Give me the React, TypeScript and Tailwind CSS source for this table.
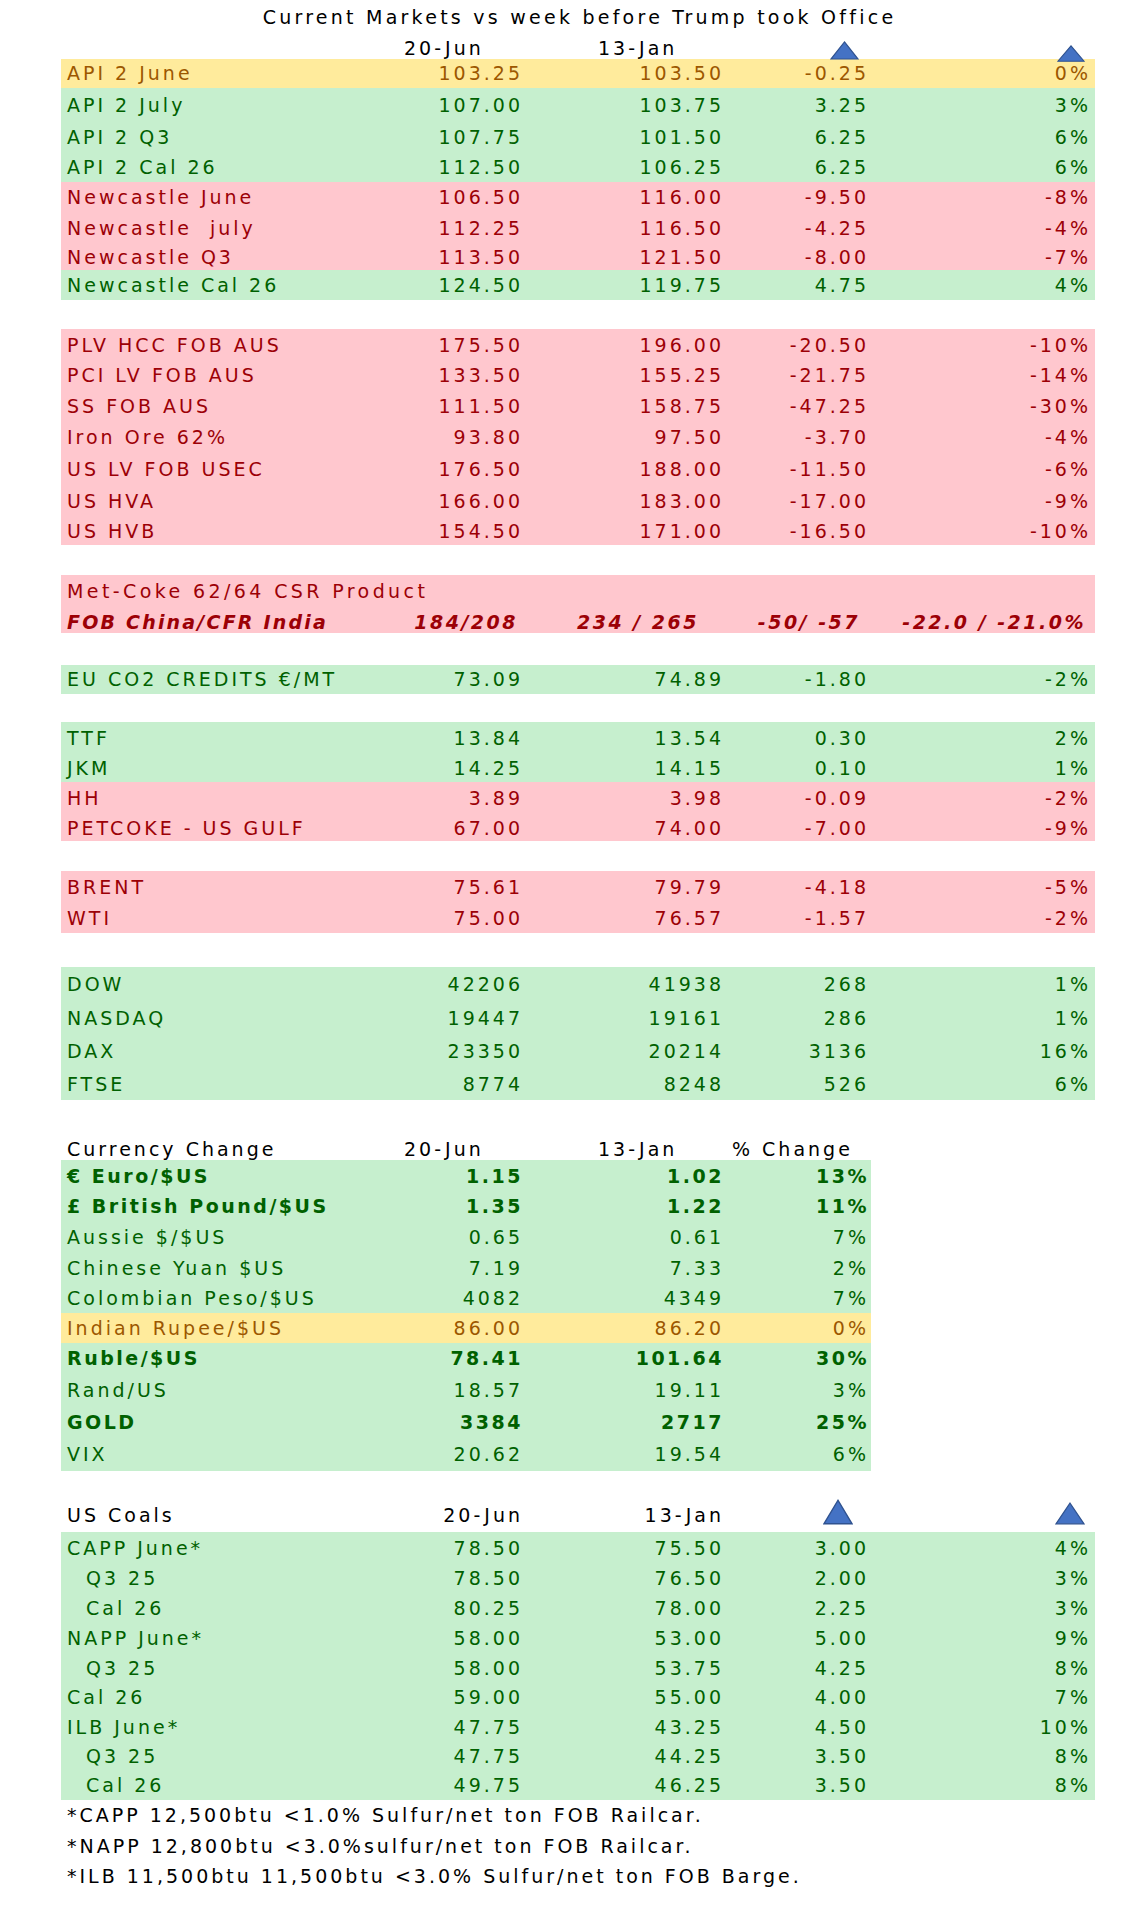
import React from "react";

type Tone = "g" | "r" | "y";

type Row = {
  label: string;
  v: string[];
  tone: Tone;
  h: string;
  bold?: boolean;
  indent?: boolean;
};

const toneCls: Record<Tone, string> = {
  g: "bg-[#c6efce] text-[#006100]",
  r: "bg-[#ffc7ce] text-[#9c0006]",
  y: "bg-[#ffeb9c] text-[#9c5700]",
};

// full-width table grid (label, 20-Jun, 13-Jan, change, %)
const wide = "grid grid-cols-[333px_123px_201px_145px_222px] items-center pl-[6px] pr-[4px]";
// currency table has no separate change column
const narrow = "grid grid-cols-[333px_123px_201px_145px] items-center pl-[6px] pr-[2px]";

const markets: Row[][] = [
  [
    { label: "API 2 June", v: ["103.25", "103.50", "-0.25", "0%"], tone: "y", h: "h-[29px]" },
    { label: "API 2 July", v: ["107.00", "103.75", "3.25", "3%"], tone: "g", h: "h-[34px]" },
    { label: "API 2 Q3", v: ["107.75", "101.50", "6.25", "6%"], tone: "g", h: "h-[31px]" },
    { label: "API 2 Cal 26", v: ["112.50", "106.25", "6.25", "6%"], tone: "g", h: "h-[29px]" },
    { label: "Newcastle June", v: ["106.50", "116.00", "-9.50", "-8%"], tone: "r", h: "h-[31px]" },
    { label: "Newcastle  july", v: ["112.25", "116.50", "-4.25", "-4%"], tone: "r", h: "h-[30px]" },
    { label: "Newcastle Q3", v: ["113.50", "121.50", "-8.00", "-7%"], tone: "r", h: "h-[27px]" },
    { label: "Newcastle Cal 26", v: ["124.50", "119.75", "4.75", "4%"], tone: "g", h: "h-[30px]" },
  ],
  [
    { label: "PLV HCC FOB AUS", v: ["175.50", "196.00", "-20.50", "-10%"], tone: "r", h: "h-[32px]" },
    { label: "PCI LV FOB AUS", v: ["133.50", "155.25", "-21.75", "-14%"], tone: "r", h: "h-[29px]" },
    { label: "SS FOB AUS", v: ["111.50", "158.75", "-47.25", "-30%"], tone: "r", h: "h-[32px]" },
    { label: "Iron Ore 62%", v: ["93.80", "97.50", "-3.70", "-4%"], tone: "r", h: "h-[31px]" },
    { label: "US LV FOB USEC", v: ["176.50", "188.00", "-11.50", "-6%"], tone: "r", h: "h-[32px]" },
    { label: "US HVA", v: ["166.00", "183.00", "-17.00", "-9%"], tone: "r", h: "h-[32px]" },
    { label: "US HVB", v: ["154.50", "171.00", "-16.50", "-10%"], tone: "r", h: "h-[28px]" },
  ],
];

const energy: Row[][] = [
  [{ label: "EU CO2 CREDITS €/MT", v: ["73.09", "74.89", "-1.80", "-2%"], tone: "g", h: "h-[29px]" }],
  [
    { label: "TTF", v: ["13.84", "13.54", "0.30", "2%"], tone: "g", h: "h-[32px]" },
    { label: "JKM", v: ["14.25", "14.15", "0.10", "1%"], tone: "g", h: "h-[28px]" },
    { label: "HH", v: ["3.89", "3.98", "-0.09", "-2%"], tone: "r", h: "h-[32px]" },
    { label: "PETCOKE - US GULF", v: ["67.00", "74.00", "-7.00", "-9%"], tone: "r", h: "h-[27px]" },
  ],
  [
    { label: "BRENT", v: ["75.61", "79.79", "-4.18", "-5%"], tone: "r", h: "h-[32px]" },
    { label: "WTI", v: ["75.00", "76.57", "-1.57", "-2%"], tone: "r", h: "h-[30px]" },
  ],
  [
    { label: "DOW", v: ["42206", "41938", "268", "1%"], tone: "g", h: "h-[35px]" },
    { label: "NASDAQ", v: ["19447", "19161", "286", "1%"], tone: "g", h: "h-[33px]" },
    { label: "DAX", v: ["23350", "20214", "3136", "16%"], tone: "g", h: "h-[33px]" },
    { label: "FTSE", v: ["8774", "8248", "526", "6%"], tone: "g", h: "h-[32px]" },
  ],
];

const gaps = ["mt-[32px]", "mt-[28px]", "mt-[30px]", "mt-[34px]"];

const currencies: Row[] = [
  { label: "€ Euro/$US", v: ["1.15", "1.02", "13%"], tone: "g", h: "h-[32px]", bold: true },
  { label: "£ British Pound/$US", v: ["1.35", "1.22", "11%"], tone: "g", h: "h-[29px]", bold: true },
  { label: "Aussie $/$US", v: ["0.65", "0.61", "7%"], tone: "g", h: "h-[32px]" },
  { label: "Chinese Yuan $US", v: ["7.19", "7.33", "2%"], tone: "g", h: "h-[31px]" },
  { label: "Colombian Peso/$US", v: ["4082", "4349", "7%"], tone: "g", h: "h-[29px]" },
  { label: "Indian Rupee/$US", v: ["86.00", "86.20", "0%"], tone: "y", h: "h-[30px]" },
  { label: "Ruble/$US", v: ["78.41", "101.64", "30%"], tone: "g", h: "h-[31px]", bold: true },
  { label: "Rand/US", v: ["18.57", "19.11", "3%"], tone: "g", h: "h-[32px]" },
  { label: "GOLD", v: ["3384", "2717", "25%"], tone: "g", h: "h-[32px]", bold: true },
  { label: "VIX", v: ["20.62", "19.54", "6%"], tone: "g", h: "h-[33px]" },
];

const coals: Row[] = [
  { label: "CAPP June*", v: ["78.50", "75.50", "3.00", "4%"], tone: "g", h: "h-[32px]" },
  { label: "Q3 25", v: ["78.50", "76.50", "2.00", "3%"], tone: "g", h: "h-[29px]", indent: true },
  { label: "Cal 26", v: ["80.25", "78.00", "2.25", "3%"], tone: "g", h: "h-[30px]", indent: true },
  { label: "NAPP June*", v: ["58.00", "53.00", "5.00", "9%"], tone: "g", h: "h-[31px]" },
  { label: "Q3 25", v: ["58.00", "53.75", "4.25", "8%"], tone: "g", h: "h-[29px]", indent: true },
  { label: "Cal 26", v: ["59.00", "55.00", "4.00", "7%"], tone: "g", h: "h-[29px]" },
  { label: "ILB June*", v: ["47.75", "43.25", "4.50", "10%"], tone: "g", h: "h-[30px]" },
  { label: "Q3 25", v: ["47.75", "44.25", "3.50", "8%"], tone: "g", h: "h-[29px]", indent: true },
  { label: "Cal 26", v: ["49.75", "46.25", "3.50", "8%"], tone: "g", h: "h-[29px]", indent: true },
];

function Tri({ cls }: { cls: string }) {
  return (
    <svg viewBox="0 0 30 20" preserveAspectRatio="none" className={cls}>
      <polygon points="15,1 29,19 1,19" fill="#4472c4" stroke="#2f528f" strokeWidth="1.2" />
    </svg>
  );
}

function DataRow({ row, grid }: { row: Row; grid: string }) {
  return (
    <div className={`${grid} ${row.h} ${toneCls[row.tone]} ${row.bold ? "font-bold tracking-[2.5px]" : ""}`}>
      <div className={`whitespace-pre ${row.indent ? "pl-[19px]" : ""}`}>{row.label}</div>
      {row.v.map((x, i) => (
        <div key={i} className="text-right">
          {x}
        </div>
      ))}
    </div>
  );
}

export default function App() {
  return (
    <div className="min-h-[1909px] bg-white font-['DejaVu_Sans',sans-serif] text-[19px] tracking-[3px] text-black">
      <div className="ml-[61px] w-[1034px]">
        <div className="flex h-[34px] items-center justify-center pl-[3px] tracking-[3.25px]">
          Current Markets vs week before Trump took Office
        </div>

        <div className={`${wide} h-[25px]`}>
          <div />
          <div className="pl-[4px]">20-Jun</div>
          <div className="pl-[75px]">13-Jan</div>
          <div className="flex h-full items-end justify-end pr-[10px] pb-[3px]">
            <Tri cls="h-[19px] w-[29px]" />
          </div>
          <div className="flex h-full items-end justify-end pr-[6px] pb-[1px]">
            <Tri cls="h-[17px] w-[28px]" />
          </div>
        </div>

        {markets.map((block, bi) => (
          <div key={bi} className={bi ? "mt-[29px]" : ""}>
            {block.map((r, i) => (
              <DataRow key={i} row={r} grid={wide} />
            ))}
          </div>
        ))}

        {/* met coke */}
        <div className="mt-[30px] bg-[#ffc7ce] text-[#9c0006]">
          <div className="flex h-[29px] items-center pl-[6px] pt-[3px] tracking-[3.4px]">Met-Coke 62/64 CSR Product</div>
          <div className={`${wide} h-[29px] pt-[4px] font-bold italic tracking-[2.5px]`}>
            <div className="tracking-[2.2px]">FOB China/CFR India</div>
            <div className="pr-[5px] text-right">184/208</div>
            <div className="pr-[25px] text-right">234 / 265</div>
            <div className="pr-[9px] text-right">-50/ -57</div>
            <div className="pr-[5px] text-right">-22.0 / -21.0%</div>
          </div>
        </div>

        {energy.map((block, bi) => (
          <div key={bi} className={gaps[bi]}>
            {block.map((r, i) => (
              <DataRow key={i} row={r} grid={wide} />
            ))}
          </div>
        ))}

        {/* currencies */}
        <div className="mt-[35px] w-[810px]">
          <div className={`${narrow} h-[25px]`}>
            <div>Currency Change</div>
            <div className="pl-[4px]">20-Jun</div>
            <div className="pl-[75px]">13-Jan</div>
            <div className="pl-[8px]">% Change</div>
          </div>
          {currencies.map((r, i) => (
            <DataRow key={i} row={r} grid={narrow} />
          ))}
        </div>

        {/* us coals */}
        <div className={`${wide} mt-[25px] h-[36px] items-end`}>
          <div className="pb-[3px]">US Coals</div>
          <div className="pb-[3px] text-right">20-Jun</div>
          <div className="pb-[3px] text-right">13-Jan</div>
          <div className="flex justify-end pr-[16px] pb-[7px]">
            <Tri cls="h-[26px] w-[30px]" />
          </div>
          <div className="flex justify-end pr-[6px] pb-[7px]">
            <Tri cls="h-[23px] w-[30px]" />
          </div>
        </div>
        {coals.map((r, i) => (
          <DataRow key={i} row={r} grid={wide} />
        ))}

        <div className="pl-[6px]">
          <div className="flex h-[31px] items-center">*CAPP 12,500btu &lt;1.0% Sulfur/net ton FOB Railcar.</div>
          <div className="flex h-[31px] items-center">*NAPP 12,800btu &lt;3.0%sulfur/net ton FOB Railcar.</div>
          <div className="flex h-[29px] items-center">*ILB 11,500btu 11,500btu &lt;3.0% Sulfur/net ton FOB Barge.</div>
        </div>
      </div>
    </div>
  );
}
